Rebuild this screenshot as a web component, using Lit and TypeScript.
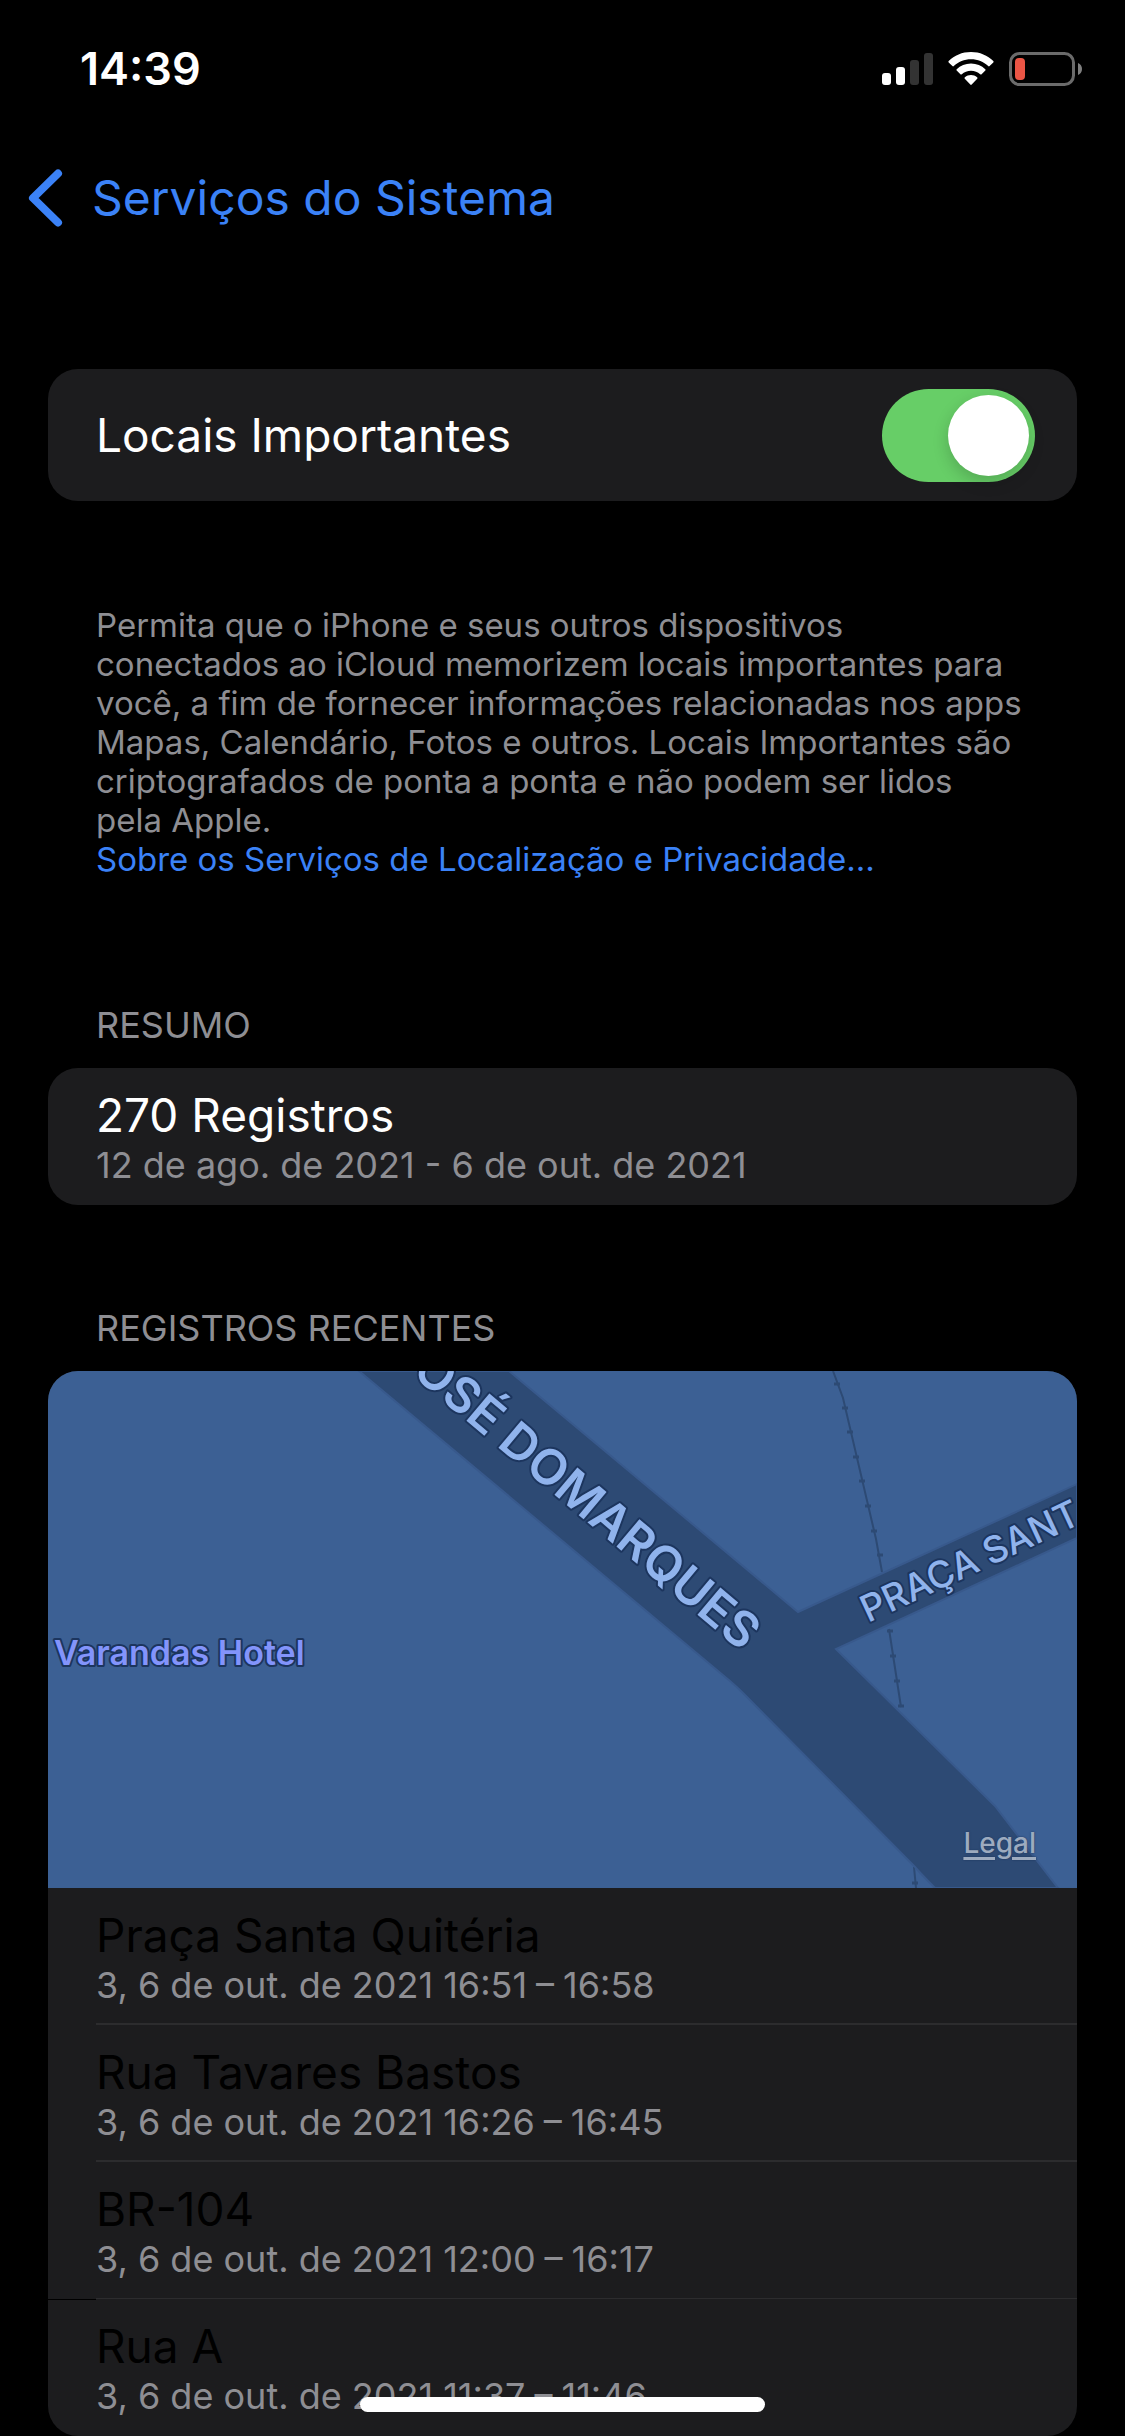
import { LitElement, html, css, svg } from "lit";
import { customElement, property, state } from "lit/decorators.js";

interface Visit {
  place: string;
  when: string;
}

const VISITS: Visit[] = [
  { place: "Praça Santa Quitéria", when: "3, 6 de out. de 2021 16:51\u2005–\u200516:58" },
  { place: "Rua Tavares Bastos", when: "3, 6 de out. de 2021 16:26\u2005–\u200516:45" },
  { place: "BR-104", when: "3, 6 de out. de 2021 12:00\u2005–\u200516:17" },
  { place: "Rua A", when: "3, 6 de out. de 2021 11:37\u2005–\u200511:46" },
];

/* Cross ties of the railway, as points on the map canvas. */
const TIES: [number, number][] = [
  [789, 13], [797, 37], [802, 61], [808, 86], [814, 110], [820, 135], [826, 160], [832, 184],
  [842, 260], [845, 285], [849, 310], [853, 335], [867, 512],
];

@customElement("status-bar")
export class StatusBar extends LitElement {
  static styles = css`
    :host {
      display: flex;
      align-items: center;
      justify-content: space-between;
      height: 138px;
      padding: 0 43px 0 80px;
      color: #fff;
    }
    .time {
      font-size: 45px;
      font-weight: 600;
      line-height: 54px;
    }
    .icons {
      display: flex;
      align-items: center;
      gap: 15px;
    }
    svg {
      display: block;
    }
  `;

  render() {
    return html`
      <span class="time">14:39</span>
      <div class="icons">
        <svg width="51" height="34" viewBox="0 0 51 34" role="img" aria-label="Sinal">
          <rect x="0" y="21" width="9" height="12" rx="3" fill="#fff" />
          <rect x="14" y="15" width="9" height="18" rx="3" fill="#fff" />
          <rect x="28" y="8" width="9" height="25" rx="3" fill="#333" />
          <rect x="42" y="1" width="9" height="32" rx="3" fill="#333" />
        </svg>
        <svg width="46" height="34" viewBox="0 0 46 34" role="img" aria-label="Wi-Fi" fill="#fff">
          <path d="M23 0C31.800 0 39.600 3.400 45.300 9Q46 9.700 45.300 10.400L41.600 14.100Q40.900 14.700 40.200 14.100C35.700 9.800 29.700 7.200 23 7.200S10.300 9.800 5.800 14.100Q5.100 14.700 4.400 14.100L.7 10.400Q0 9.700 .7 9C6.400 3.400 14.200 0 23 0Z" />
          <path d="M23 11.500C28.600 11.500 33.600 13.700 37.300 17.200Q38 17.900 37.300 18.600L33.600 22.300Q32.900 22.900 32.200 22.300C29.800 20.100 26.600 18.700 23 18.700S16.200 20.100 13.800 22.300Q13.100 22.900 12.400 22.300L8.700 18.600Q8 17.900 8.700 17.200C12.400 13.700 17.400 11.500 23 11.500Z" />
          <path d="M23 23C25.300 23 27.400 23.800 29.100 25.200Q30 25.900 29.200 26.700L23.700 32.600Q23 33.300 22.300 32.600L16.800 26.700Q16 25.900 16.900 25.200C18.600 23.800 20.700 23 23 23Z" />
        </svg>
        <svg width="73" height="34" viewBox="0 0 73 34" role="img" aria-label="Bateria">
          <rect x="1.500" y="1.500" width="63" height="31" rx="9" fill="none" stroke="#6b6b6b" stroke-width="3" />
          <rect x="6" y="6" width="10" height="22" rx="4" fill="#eb5545" />
          <path d="M69 11C71.500 12 73 14.300 73 17S71.500 22 69 23Z" fill="#7f7f7f" />
        </svg>
      </div>
    `;
  }
}

@customElement("place-map")
export class PlaceMap extends LitElement {
  static styles = css`
    :host {
      display: block;
      position: relative;
      background: #3c6094;
    }
    svg {
      display: block;
      width: 100%;
      height: auto;
    }
    .label {
      fill: #90b3ec;
      stroke: #1c355e;
      stroke-width: 4px;
      stroke-linejoin: round;
      paint-order: stroke;
    }
    .avenue {
      font-size: 49px;
      font-weight: 600;
    }
    .street {
      font-size: 37px;
      font-weight: 500;
    }
    .hotel {
      font-size: 34px;
      font-weight: 600;
      fill: #8394fb;
    }
    .legal {
      position: absolute;
      right: 41px;
      bottom: 28px;
      color: #9dabbf;
      font-size: 28px;
      font-weight: 500;
      line-height: 34px;
      text-decoration: underline;
      text-decoration-thickness: 3px;
      text-underline-offset: 4px;
      text-shadow: 0 0 2px #1c355e;
    }
  `;

  render() {
    return html`
      <svg viewBox="0 0 1029 517" role="img" aria-label="Mapa">
        <g fill="none" stroke="#2d4a74" stroke-width="2">
          <path d="M785 0L795 27L828 168L834 201M841 258L853 336M866 496L868 517" />
          ${TIES.map(([x, y]) => svg`<path d="M${x - 3} ${y}h6" stroke-width="3" />`)}
        </g>
        <path
          d="M311 0L682 310Q689 316 696 323L867 496Q873 503 887 517H1010L947 435L788 278L1029 167V113L750 241L461 0Z"
          fill="#2d4a74" stroke="#38598c" stroke-width="2"
        />
        <text class="label avenue" text-anchor="end" transform="translate(694 281) rotate(40)">OSÉ DOMARQUES</text>
        <text class="label street" transform="translate(820 252) rotate(-25)">PRAÇA SANT</text>
        <text class="label hotel" x="6" y="294">Varandas Hotel</text>
      </svg>
      <a class="legal" href="#legal">Legal</a>
    `;
  }
}

@customElement("record-row")
export class RecordRow extends LitElement {
  @property() heading = "";
  @property() detail = "";

  static styles = css`
    :host {
      display: block;
      padding-left: 48px;
      color: #fff;
    }
    .body {
      height: 137px;
      box-sizing: border-box;
      padding: 19px 48px 0 0;
      border-bottom: var(--divider, 0) solid #2c2c2e;
    }
    .heading {
      font-size: 46px;
      line-height: 56px;
    }
    .detail {
      color: #8e8e93;
      font-size: 36px;
      line-height: 44px;
    }
  `;

  render() {
    return html`
      <div class="body">
        <div class="heading">${this.heading}</div>
        <div class="detail">${this.detail}</div>
      </div>
    `;
  }
}

@customElement("app-root")
export class AppRoot extends LitElement {
  @state() private enabled = true;

  static styles = css`
    :host {
      display: block;
      position: relative;
      min-height: 100vh;
      background: #000;
      color: #fff;
      font-family: Inter, "Liberation Sans", sans-serif;
    }
    .nav {
      display: flex;
      align-items: center;
      height: 120px;
      padding-left: 28px;
    }
    .back {
      display: flex;
      align-items: center;
      gap: 28px;
      padding: 0;
      border: 0;
      background: none;
      color: #3b82f7;
      font: inherit;
      font-size: 48px;
      line-height: 60px;
    }
    main {
      padding: 111px 48px 0;
    }
    .card {
      border-radius: 30px;
      background: #1c1c1e;
      overflow: hidden;
    }
    .setting {
      display: flex;
      align-items: center;
      justify-content: space-between;
      height: 132px;
      padding: 0 42px 0 48px;
      font-size: 46px;
      line-height: 56px;
    }
    .switch {
      appearance: none;
      display: block;
      width: 153px;
      height: 93px;
      margin: 0;
      padding: 6px;
      box-sizing: border-box;
      border-radius: 47px;
      background: #39393d;
    }
    .switch::before {
      content: "";
      display: block;
      width: 81px;
      height: 81px;
      border-radius: 50%;
      background: #fff;
      box-shadow: 0 6px 16px rgba(0, 0, 0, 0.18);
    }
    .switch:checked {
      background: #67ce67;
    }
    .switch:checked::before {
      margin-left: auto;
    }
    .note {
      margin: 105px 52px 0 48px;
      color: #8e8e93;
      font-size: 33px;
      line-height: 39px;
    }
    .note p {
      margin: 0;
    }
    .note a {
      color: #3b82f7;
      text-decoration: none;
    }
    h2 {
      margin: 101px 48px 21px;
      color: #8e8e93;
      font-size: 36px;
      font-weight: 400;
      line-height: 44px;
    }
    .note + h2 {
      margin-top: 124px;
    }
    .visit {
      --divider: 2px;
      color: #000;
    }
    .visit:nth-last-child(2) {
      --divider: 1px;
    }
    .visit:last-child {
      --divider: 0;
      background: linear-gradient(#000, #000) 0 0 / 48px 1px no-repeat;
    }
    .home {
      position: absolute;
      bottom: 24px;
      left: 32%;
      width: 36%;
      height: 15px;
      border-radius: 8px;
      background: #fff;
    }
  `;

  private toggle(event: Event) {
    this.enabled = (event.target as HTMLInputElement).checked;
  }

  render() {
    return html`
      <status-bar></status-bar>
      <nav class="nav">
        <button class="back" type="button">
          <svg width="36" height="60" viewBox="0 0 36 60" fill="none" stroke="currentColor" stroke-width="8" stroke-linecap="round" stroke-linejoin="round" aria-hidden="true">
            <path d="M30 5.500L5 30L30 54.500" />
          </svg>
          <span>Serviços do Sistema</span>
        </button>
      </nav>
      <main>
        <section class="card setting">
          <label for="important">Locais Importantes</label>
          <input id="important" class="switch" type="checkbox" role="switch" .checked=${this.enabled} @change=${this.toggle} />
        </section>
        <div class="note">
          <p>
            Permita que o iPhone e seus outros dispositivos conectados ao iCloud memorizem locais importantes para
            você, a fim de fornecer informações relacionadas nos apps Mapas, Calendário, Fotos e outros. Locais
            Importantes são criptografados de ponta a ponta e não podem ser lidos pela Apple.
          </p>
          <a href="#privacidade">Sobre os Serviços de Localização e Privacidade…</a>
        </div>
        <h2>RESUMO</h2>
        <section class="card">
          <record-row heading="270 Registros" detail="12 de ago. de 2021 - 6 de out. de 2021"></record-row>
        </section>
        <h2>REGISTROS RECENTES</h2>
        <section class="card">
          <place-map></place-map>
          ${VISITS.map(
            (visit) => html`<record-row class="visit" .heading=${visit.place} .detail=${visit.when}></record-row>`,
          )}
        </section>
      </main>
      <div class="home"></div>
    `;
  }
}
